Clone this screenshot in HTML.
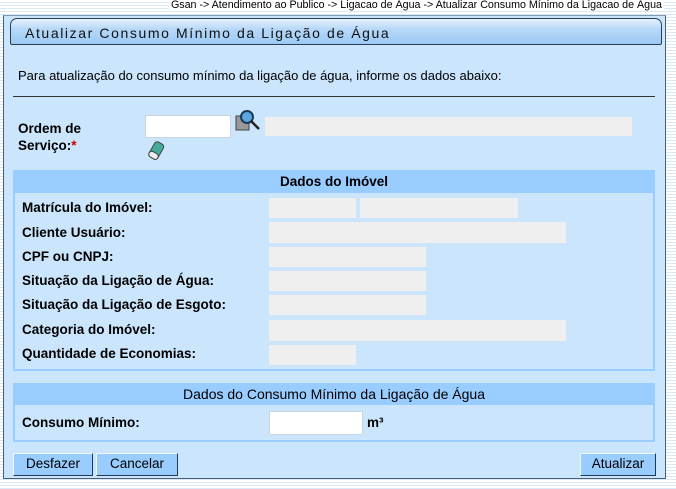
<!DOCTYPE html>
<html><head><meta charset="utf-8"><style>
*{margin:0;padding:0;box-sizing:border-box}
body{width:676px;height:489px;overflow:hidden;font-family:"Liberation Sans",Arial,sans-serif;font-size:12px;color:#000;
background:repeating-linear-gradient(180deg,#ffffff 0,#ffffff 2px,#dbe8f5 2px,#dbe8f5 3px);position:relative}
.a{position:absolute;white-space:nowrap}
.bread{right:12px;top:0;font-size:10.7px;background:#fff;padding:0 2px;line-height:11px}
.panel{left:3px;top:15px;width:663px;height:464px;background:#cbe5fd;border:1px solid #46607a;border-top:1px solid #7a9ab8}
.title{left:10px;top:18px;width:652px;height:27px;border:1px solid #2a3f55;border-radius:7px 7px 2px 2px;
background:linear-gradient(#e6f2fd,#b7d8f8 40%,#9ccaf5);font-size:14px;letter-spacing:1.6px;padding:6px 0 0 14px;color:#111}
.b{font-weight:bold}
.f{background:#efefef}
.w{background:#fff;border:1px solid #c8d4df}
.tb{background:#99ccff}
.in{background:#cbe5fd;border:2px solid #99ccff;border-top:none}
.btn{background:#99ccff;border:1px solid;border-color:#eef6ff #1f3a55 #1f3a55 #eef6ff;font-size:13.5px;text-align:center;line-height:20px;height:23px}
.lab{left:22px;font-weight:bold;font-size:13.5px}
</style></head><body>
<div class="a bread">Gsan -&gt; Atendimento ao Publico -&gt; Ligacao de Água -&gt; Atualizar Consumo Mínimo da Ligacao de Água</div>
<div class="a panel"></div>
<div class="a title">Atualizar Consumo Mínimo da Ligação de Água</div>
<div class="a" style="left:18px;top:68px;font-size:13px">Para atualização do consumo mínimo da ligação de água, informe os dados abaixo:</div>
<div class="a" style="left:13px;top:96px;width:642px;height:1px;background:#333"></div>
<div class="a b" style="left:18px;top:120px;font-size:13.5px;line-height:17px">Ordem de<br>Serviço:<span style="color:#c00">*</span></div>
<div class="a w" style="left:145px;top:115px;width:86px;height:23px"></div>
<svg class="a" style="left:235px;top:109px" width="28" height="24" viewBox="0 0 28 24">
<rect x="1" y="7" width="13" height="14" fill="#999" stroke="#444"/><circle cx="12" cy="8" r="6" fill="#5aa6e0" stroke="#1a3a5a" stroke-width="2"/><line x1="16" y1="12" x2="24" y2="20" stroke="#222" stroke-width="2.5"/></svg>
<svg class="a" style="left:145px;top:140px" width="22" height="22" viewBox="0 0 22 22">
<g transform="rotate(30 11 11)"><rect x="6" y="2" width="10" height="17" rx="3" fill="#4a9" stroke="#444"/><rect x="6" y="13" width="10" height="6" rx="3" fill="#eee" stroke="#444"/></g></svg>
<div class="a f" style="left:265px;top:117px;width:367px;height:19px"></div>

<div class="a tb b" style="left:13px;top:170px;width:642px;height:23px;text-align:center;line-height:23px;font-size:13.5px">Dados do Imóvel</div>
<div class="a in" style="left:13px;top:193px;width:642px;height:178px"></div>
<div class="a lab" style="top:200px">Matrícula do Imóvel:</div>
<div class="a f" style="left:269px;top:198px;width:87px;height:20px"></div>
<div class="a f" style="left:360px;top:198px;width:158px;height:20px"></div>
<div class="a lab" style="top:225px">Cliente Usuário:</div>
<div class="a f" style="left:269px;top:222px;width:297px;height:21px"></div>
<div class="a lab" style="top:249px">CPF ou CNPJ:</div>
<div class="a f" style="left:269px;top:247px;width:157px;height:20px"></div>
<div class="a lab" style="top:273px">Situação da Ligação de Água:</div>
<div class="a f" style="left:269px;top:271px;width:157px;height:20px"></div>
<div class="a lab" style="top:297px">Situação da Ligação de Esgoto:</div>
<div class="a f" style="left:269px;top:295px;width:157px;height:20px"></div>
<div class="a lab" style="top:322px">Categoria do Imóvel:</div>
<div class="a f" style="left:269px;top:320px;width:297px;height:21px"></div>
<div class="a lab" style="top:346px">Quantidade de Economias:</div>
<div class="a f" style="left:269px;top:345px;width:87px;height:20px"></div>

<div class="a tb" style="left:13px;top:383px;width:642px;height:22px;text-align:center;line-height:22px;font-size:14px">Dados do Consumo Mínimo da Ligação de Água</div>
<div class="a in" style="left:13px;top:405px;width:642px;height:37px"></div>
<div class="a lab" style="top:415px">Consumo Mínimo:</div>
<div class="a w" style="left:269px;top:411px;width:94px;height:24px"></div>
<div class="a b" style="left:367px;top:415px;font-size:13.5px">m³</div>

<div class="a btn" style="left:13px;top:453px;width:80px">Desfazer</div>
<div class="a btn" style="left:96px;top:453px;width:82px">Cancelar</div>
<div class="a btn" style="left:580px;top:453px;width:76px">Atualizar</div>
</body></html>
